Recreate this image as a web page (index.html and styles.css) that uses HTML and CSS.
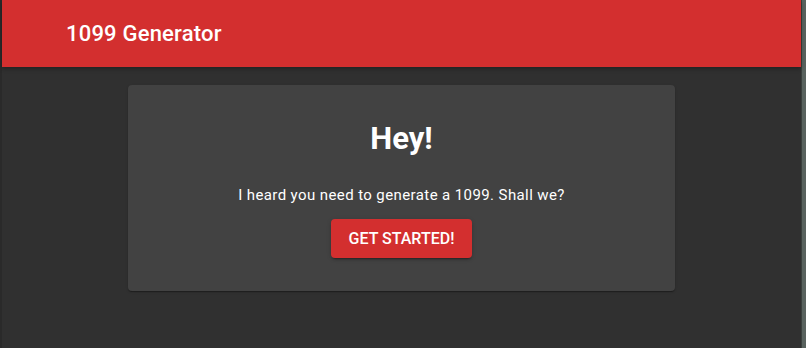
FILE: index.html
```html
<!DOCTYPE html>
<html lang="en">
<head>
  <meta charset="UTF-8" />
  <meta name="viewport" content="width=device-width, initial-scale=1.0" />
  <title>1099 Generator</title>
  <link rel="stylesheet" href="styles.css">
</head>
<body>
  <div class="edge-left"></div>
  <div class="app">
    <header class="toolbar">
      <span class="toolbar-title">1099 Generator</span>
    </header>
    <main class="content">
      <div class="card">
        <h1 class="card-title">Hey!</h1>
        <p class="card-text">I heard you need to generate a 1099. Shall we?</p>
        <button class="btn-start">GET STARTED!</button>
      </div>
    </main>
  </div>
  <div class="edge-right"></div>
</body>
</html>
```

FILE: styles.css
```css
html, body {
  height: 100%;
}
body {
  margin: 0;
  display: flex;
  background-color: #303030;
  font-family: Roboto, "Liberation Sans", Arial, sans-serif;
  color: #ffffff;
  overflow: hidden;
}
.edge-left {
  width: 2px;
  background: #2a2a2a;
}
.edge-right {
  width: 5px;
  background: #59625e;
  border-left: 1px solid #3a403d;
  box-sizing: border-box;
}
.app {
  flex: 1;
  display: flex;
  flex-direction: column;
}
.toolbar {
  height: 67px;
  display: flex;
  align-items: center;
  padding-left: 64px;
  background: #d32f2f;
  box-shadow: 0 2px 4px rgba(0, 0, 0, 0.3);
  position: relative;
  z-index: 1;
}
.toolbar-title {
  font-size: 22px;
  font-weight: 500;
  letter-spacing: 0.2px;
}
.content {
  padding-top: 18px;
}
.card {
  width: 547px;
  margin: 0 auto;
  box-sizing: border-box;
  padding: 36px 16px 33px;
  background: #424242;
  border-radius: 4px;
  box-shadow: 0 2px 1px -1px rgba(0, 0, 0, 0.2), 0 1px 1px rgba(0, 0, 0, 0.14), 0 1px 3px rgba(0, 0, 0, 0.12);
  text-align: center;
}
.card-title {
  margin: 0;
  font-size: 31px;
  line-height: 36px;
  font-weight: 700;
}
.card-text {
  margin: 28px 0 14px;
  font-size: 15px;
  line-height: 20px;
  letter-spacing: 0.4px;
}
.btn-start {
  font-family: inherit;
  font-size: 16px;
  font-weight: 500;
  line-height: 19px;
  padding: 10px 18px;
  color: #ffffff;
  background: #d32f2f;
  border: none;
  border-radius: 4px;
  box-shadow: 0 3px 1px -2px rgba(0, 0, 0, 0.2), 0 2px 2px rgba(0, 0, 0, 0.14), 0 1px 5px rgba(0, 0, 0, 0.12);
  cursor: pointer;
}
```
